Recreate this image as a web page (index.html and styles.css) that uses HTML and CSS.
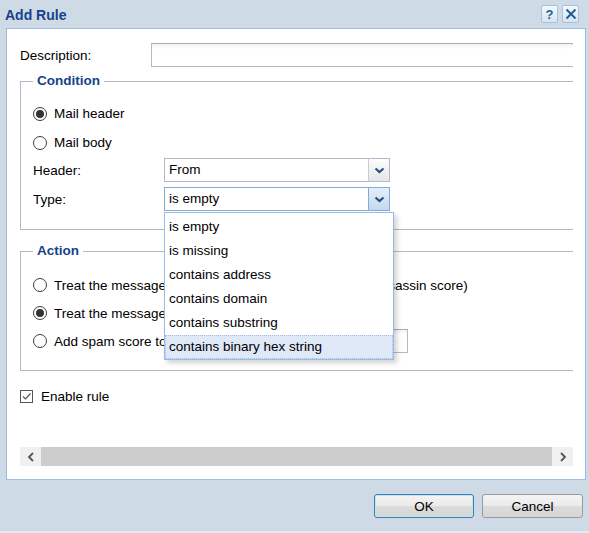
FILE: index.html
```html
<!DOCTYPE html>
<html>
<head>
<meta charset="utf-8">
<link rel="stylesheet" href="styles.css">
</head>
<body>
<div class="window">
  <div class="titlebar">
    <span class="title">Add Rule</span>
    <div class="tools">
      <span class="tool"><span class="q">?</span></span>
      <span class="tool"><svg width="12" height="12" viewBox="0 0 12 12"><path d="M1.5 1.5 L10.5 10.5 M10.5 1.5 L1.5 10.5" stroke="#1f5f9b" stroke-width="2" fill="none"/></svg></span>
    </div>
  </div>
  <div class="panel">
    <div class="scroller">
      <div class="content">
        <div class="row desc-row">
          <span class="label">Description:</span>
          <span class="textbox wide"></span>
        </div>
        <fieldset class="group cond">
          <legend>Condition</legend>
          <div class="radio-row"><span class="radio on"></span><span>Mail header</span></div>
          <div class="radio-row"><span class="radio"></span><span>Mail body</span></div>
          <div class="row field-row first">
            <span class="label">Header:</span>
            <span class="combo"><span class="combo-text">From</span><span class="trigger"><svg width="11" height="7" viewBox="0 0 11 7"><path d="M1.5 1.5 L5.5 5 L9.5 1.5" stroke="#2c4f7e" stroke-width="2.2" fill="none"/></svg></span></span>
          </div>
          <div class="row field-row">
            <span class="label">Type:</span>
            <span class="combo focus"><span class="combo-text">is empty</span><span class="trigger"><svg width="11" height="7" viewBox="0 0 11 7"><path d="M1.5 1.5 L5.5 5 L9.5 1.5" stroke="#2c4f7e" stroke-width="2.2" fill="none"/></svg></span>
              <ul class="dropdown">
                <li>is empty</li>
                <li>is missing</li>
                <li>contains address</li>
                <li>contains domain</li>
                <li>contains substring</li>
                <li class="sel">contains binary hex string</li>
              </ul>
            </span>
          </div>
        </fieldset>
        <fieldset class="group act">
          <legend>Action</legend>
          <div class="radio-row"><span class="radio"></span><span>Treat the message as a spam (set the maximal Spamassassin score)</span></div>
          <div class="radio-row"><span class="radio on"></span><span>Treat the message as not spam</span></div>
          <div class="radio-row"><span class="radio"></span><span class="addtext">Add spam score to message:</span><span class="textbox score"></span></div>
        </fieldset>
        <div class="check-row"><span class="checkbox"><svg width="11" height="11" viewBox="0 0 11 11"><path d="M2 5.5 L4.5 8 L9.5 2.5" stroke="#555" stroke-width="1.2" fill="none"/></svg></span><span class="enable">Enable rule</span></div>
      </div>
    </div>
    <div class="hscroll">
      <span class="arrow"><svg width="8" height="10" viewBox="0 0 8 10"><path d="M6 1 L2 5 L6 9" stroke="#555" stroke-width="1.8" fill="none"/></svg></span>
      <span class="thumb"></span>
      <span class="arrow"><svg width="8" height="10" viewBox="0 0 8 10"><path d="M2 1 L6 5 L2 9" stroke="#555" stroke-width="1.8" fill="none"/></svg></span>
    </div>
  </div>
  <div class="footer">
    <span class="btn focus">OK</span>
    <span class="btn">Cancel</span>
  </div>
</div>
</body>
</html>
```

FILE: styles.css
```css
html, body {
  margin: 0;
  padding: 0;
}
body {
  background: #cfdae7;
  font-family: "Liberation Sans", Arial, sans-serif;
  font-size: 13.5px;
  color: #000;
  width: 589px;
  height: 533px;
  overflow: hidden;
}
.window {
  width: 589px;
  height: 533px;
  box-sizing: border-box;
  border-bottom: 2px solid #e3e9f1;
}
.titlebar {
  height: 28px;
  display: flex;
  align-items: center;
  justify-content: space-between;
  padding: 0 10px 0 5px;
}
.title {
  font-weight: bold;
  font-size: 14px;
  color: #15428b;
  margin-top: 1px;
}
.tools {
  display: flex;
  gap: 4px;
}
.tool {
  width: 15px;
  height: 16px;
  border: 1px solid #a9c0dc;
  border-radius: 2px;
  background: linear-gradient(#f4f8fc, #d8e4f2);
  display: flex;
  align-items: center;
  justify-content: center;
}
.q {
  font-weight: bold;
  font-size: 13px;
  color: #1f5f9b;
  line-height: 1;
}
.panel {
  margin: 0 3px 0 6px;
  height: 452px;
  box-sizing: border-box;
  border: 1px solid #9fbbe5;
  background: #fff;
  padding: 0 12px 0 13px;
}
.scroller {
  height: 418px;
  overflow: hidden;
}
.content {
  width: 720px;
  padding-top: 14px;
}
.row {
  display: flex;
  align-items: center;
  height: 24px;
}
.label {
  width: 131px;
  flex: none;
}
.textbox {
  display: block;
  height: 24px;
  box-sizing: border-box;
  border: 1px solid #b5b8c8;
  border-top-color: #a8abb8;
  background: linear-gradient(#f1f3f4, #fff 5px);
  flex: none;
}
.wide {
  width: 560px;
}
.group {
  margin: 0;
  border: 1px solid #b5b8c8;
  padding: 10px 12px 18px 12px;
}
.cond {
  margin-top: 6px;
}
.act {
  margin-top: 13px;
  padding-top: 12px;
  padding-bottom: 15px;
}
legend {
  font-weight: bold;
  color: #15428b;
  font-size: 13.5px;
  line-height: 16px;
  padding: 0 4px;
}
.radio-row {
  display: flex;
  align-items: center;
  height: 29px;
  white-space: nowrap;
}
.act .radio-row {
  height: 28px;
}
.radio {
  width: 14px;
  height: 14px;
  box-sizing: border-box;
  border: 1px solid #3c3c3c;
  border-radius: 50%;
  background: #fff;
  margin-right: 7px;
  flex: none;
  display: flex;
  align-items: center;
  justify-content: center;
}
.radio.on::after {
  content: "";
  width: 8px;
  height: 8px;
  border-radius: 50%;
  background: #333;
}
.field-row.first {
  margin-top: 1px;
}
.field-row + .field-row {
  margin-top: 5px;
}
.combo {
  position: relative;
  display: flex;
  width: 226px;
  height: 24px;
  box-sizing: border-box;
  border: 1px solid #b5b8c8;
  background: #fff;
}
.combo-text {
  flex: 1;
  padding-left: 4px;
  line-height: 22px;
}
.trigger {
  width: 20px;
  border-left: 1px solid #c9ccd6;
  background: linear-gradient(#fdfdfd, #e4e6e9);
  display: flex;
  align-items: center;
  justify-content: center;
}
.combo.focus {
  border-color: #7eadd9;
}
.combo.focus .trigger {
  border-left-color: #7eadd9;
  background: linear-gradient(#e6eff9, #c4d8ef);
}
.dropdown {
  position: absolute;
  left: -1px;
  top: 24px;
  width: 230px;
  box-sizing: border-box;
  margin: 0;
  padding: 2px 0 0 0;
  list-style: none;
  background: #fff;
  border: 1px solid #99bbe8;
  box-shadow: 3px 3px 5px rgba(0, 0, 0, 0.18);
  z-index: 5;
}
.dropdown li {
  box-sizing: border-box;
  height: 24px;
  line-height: 22px;
  padding-left: 3px;
  white-space: nowrap;
  border: 1px solid transparent;
}
.dropdown li.sel {
  background: #dfe8f6;
  border: 1px dotted #a3bae9;
}
.addtext {
  margin-right: 10px;
}
.score {
  width: 169px;
}
.check-row {
  display: flex;
  align-items: center;
  height: 20px;
  margin-top: 15px;
}
.checkbox {
  width: 13px;
  height: 13px;
  box-sizing: border-box;
  border: 1px solid #555;
  background: #fff;
  margin-right: 8px;
  display: flex;
  align-items: center;
  justify-content: center;
}
.hscroll {
  display: flex;
  height: 19px;
}
.arrow {
  width: 21px;
  background: #f0f0f0;
  display: flex;
  align-items: center;
  justify-content: center;
}
.thumb {
  flex: 1;
  background: #cdcdcd;
}
.footer {
  display: flex;
  justify-content: flex-end;
  gap: 8px;
  padding: 14px 6px 0 0;
}
.btn {
  width: 101px;
  height: 24px;
  box-sizing: border-box;
  border: 1px solid #9a9a9a;
  border-radius: 3px;
  background: linear-gradient(#f4f4f4 0%, #ebebeb 48%, #dcdcdc 52%, #d6d6d6 100%);
  display: flex;
  align-items: center;
  justify-content: center;
}
.btn.focus {
  width: 100px;
  border-color: #3c7fb1;
  box-shadow: inset 0 0 0 1px #c5e3f7;
}
```
